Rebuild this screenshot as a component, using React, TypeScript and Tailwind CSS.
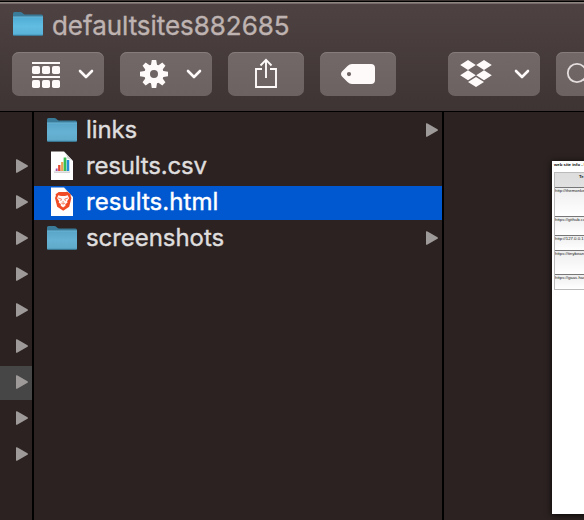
import type { ReactNode } from "react";

function Folder({ header = false }: { header?: boolean }) {
  const id = header ? "folderHeader" : "folderRow";
  return (
    <svg width="32" height="26" viewBox="0 0 32 26" className="shrink-0">
      <defs>
        <linearGradient id={id} x1="0" y1="0" x2="0" y2="1">
          <stop offset="0" stopColor={header ? "#4fabd3" : "#58a5c9"} />
          <stop offset="0.5" stopColor={header ? "#62bde3" : "#66b2d4"} />
          <stop offset="1" stopColor={header ? "#58b0d6" : "#5fa8c8"} />
        </linearGradient>
      </defs>
      <path d="M1 7V2.500q0-1.500 1.500-1.500h6q1 0 1.800.8l1 1q.7.600 1.700.6h16.500q1.500 0 1.500 1.500V8H1z" fill="#397b98" />
      <path d="M1 6h30v17.500q0 1-1 1H2q-1 0-1-1z" fill={`url(#${id})`} />
      <path d="M1 5.900h30" stroke="#75bfdd" strokeWidth=".8" />
      <path d="M1.500 24.300h29" stroke="#387a98" strokeWidth="1" />
    </svg>
  );
}

function Page({ children }: { children: ReactNode }) {
  return (
    <svg width="24" height="30" viewBox="0 0 24 30" className="shrink-0">
      <path d="M1 .5h13L23 10v19H1z" fill="#fefefe" />
      <path d="M14 .5 23 10q-3-2.300-5.500-2.500Q17 4 14 .5z" fill="#cfcfd0" />
      {children}
    </svg>
  );
}

function CsvIcon() {
  return (
    <Page>
      <path d="M5.500 18.500h13l2 2.500H3.500z" fill="#e4e4e6" />
      <path d="M4 21.500h16" stroke="#ccc" strokeWidth=".8" />
      <path d="M6.700 20v-2.500" stroke="#a34ca9" strokeWidth="1.800" />
      <path d="M9.300 20v-6" stroke="#e54831" strokeWidth="2.400" />
      <path d="M12.200 20v-9" stroke="#eda252" strokeWidth="2.200" />
      <path d="M15 20V6.500" stroke="#38bd55" strokeWidth="2.700" />
      <path d="M18 20V9" stroke="#258ed4" strokeWidth="2.500" />
    </Page>
  );
}

function BraveIcon() {
  return (
    <Page>
      <path d="m8.800 5-3.200 2.300.3 1.500-.9 2.300 2.200 8.600 6 4 6-4 2.200-8.600-.9-2.300.3-1.500L17.600 5z" fill="#f04b24" />
      <path d="m8.300 8.200 2.700.7h4l2.700-.7 1.400 3-2 3 .4 1.600-2.100 1.100.1 1.900-2.400 1.600-2.400-1.600.1-1.900-2.100-1.100.4-1.600-2-3z" fill="#fff9f7" />
      <path d="m8.200 11 3.300 1-.8 2M18 11l-3.300 1 .8 2M11.200 16l1.900 1.200 1.900-1.200M13.100 14v3" fill="none" stroke="#f26a49" strokeWidth=".8" />
    </Page>
  );
}

function Chevron() {
  return (
    <svg width="16" height="10" viewBox="0 0 16 10">
      <path d="m2 2 6 6 6-6" fill="none" stroke="#fffafa" strokeWidth="2.600" strokeLinecap="round" strokeLinejoin="round" />
    </svg>
  );
}

function Triangle() {
  return (
    <svg width="12" height="14" viewBox="0 0 12 14" className="shrink-0">
      <path d="M0 .6Q.4-.2 1.500.4l10 5.800q.9.800 0 1.600l-10 5.800Q.4 14.200 0 13.400z" fill="#9f9a9a" />
    </svg>
  );
}

function ToolButton({ width, children }: { width: string; children: ReactNode }) {
  return (
    <div className={`${width} flex h-11 shrink-0 items-center rounded-[7px] bg-linear-to-b from-[#716867] to-[#6b6261] shadow-[inset_0_1px_0_#857c7b]`}>
      {children}
    </div>
  );
}

function GridIcon() {
  return (
    <svg width="28" height="26" viewBox="0 0 28 26" fill="#fffafa" className="mt-0.5">
      <path d="M0 0h28v2H0zM0 14h28v2H0z" />
      {[0, 10, 20].map((x) => (
        <g key={x}>
          <rect x={x} y="4" width="8" height="8" rx="1.800" />
          <rect x={x} y="18" width="8" height="8" rx="1.800" />
        </g>
      ))}
    </svg>
  );
}

function Gear() {
  return (
    <svg width="28" height="28" viewBox="0 0 28 28" fill="#fffafa">
      <path fillRule="evenodd" d="M14 4.200a9.800 9.800 0 1 0 0 19.600 9.800 9.800 0 0 0 0-19.600zm0 5.800a4 4 0 1 1 0 8 4 4 0 0 1 0-8z" />
      {[0, 45, 90, 135, 180, 225, 270, 315].map((a) => (
        <path key={a} d="M11.800 0h4.400l1 6h-6.400z" transform={`rotate(${a} 14 14)`} />
      ))}
    </svg>
  );
}

const files = [
  { name: "links", icon: <Folder />, dir: true, tracking: "tracking-[-0.1px]" },
  { name: "results.csv", icon: <CsvIcon />, dir: false, tracking: "tracking-[-0.18px]" },
  { name: "results.html", icon: <BraveIcon />, dir: false, tracking: "tracking-[0.05px]" },
  { name: "screenshots", icon: <Folder />, dir: true, tracking: "tracking-[-0.06px]" },
];

const sites = [
  ["http://themonkey", "h-[29px]"],
  ["https://github.co", "h-[19px]"],
  ["http://127.0.0.1", "h-[15px]"],
  ["https://tinybeans", "h-[24px]"],
  ["https://gaas.han", "h-[15px]"],
];

export default function App() {
  return (
    <div className="flex h-[520px] w-[584px] flex-col overflow-hidden bg-[#2b2221] font-['Inter',sans-serif]">
      <header className="h-28 shrink-0 border-b border-black bg-linear-to-b from-[#4e4342] to-[#3e3433]">
        <div className="h-px bg-[#393432]" />
        <div className="h-px bg-black" />
        <div className="h-px bg-[#8d8482]" />
        <div className="h-px bg-[#776d6b]" />
        <div className="flex h-12 items-center pl-3">
          <div className="-mt-2"><Folder header /></div>
          <span className="-mt-1 ml-2 text-[26px] leading-8 tracking-[-0.05px] whitespace-nowrap text-[#beb3b1] [-webkit-text-stroke:0.35px_#beb3b1]">defaultsites882685</span>
        </div>
        <div className="flex w-[640px] gap-4 pl-3">
          <ToolButton width="w-[92px]"><div className="ml-5"><GridIcon /></div><div className="ml-[18px]"><Chevron /></div></ToolButton>
          <ToolButton width="w-[92px]"><div className="ml-5"><Gear /></div><div className="ml-[18px]"><Chevron /></div></ToolButton>
          <ToolButton width="w-[76px]">
            <svg width="24" height="32" viewBox="0 0 24 32" className="mb-1 ml-[26px]" fill="none" stroke="#fffafa" strokeWidth="1.900">
              <path d="M8 13H2v18h20V13h-6M12 22V4M6.500 9.500 12 3.800l5.500 5.700" />
            </svg>
          </ToolButton>
          <ToolButton width="w-[76px]">
            <svg width="34" height="20" viewBox="0 0 34 20" className="ml-[21px]">
              <path fillRule="evenodd" d="M11 0h19q4 0 4 4v12q0 4-4 4H11q-2.500 0-4.500-2L1 12.500q-2-2.500 0-5L6.500 2Q8.500 0 11 0zM8 8a2.100 2.100 0 1 0 0 4.200A2.100 2.100 0 0 0 8 8z" fill="#fffafa" />
            </svg>
          </ToolButton>
          <div className="ml-9">
            <ToolButton width="w-[92px]">
              <svg width="32" height="27" viewBox="0 0 32 27" className="mb-px ml-3" fill="#fffafa">
                <path d="m8 0 7.800 5L8 10 .2 5zM24 0l7.800 5-7.800 5-7.800-5zM8 10.200l7.800 5-7.800 5-7.800-5zM24 10.200l7.800 5-7.800 5-7.800-5zM16 17l8 5-8 5-8-5z" />
              </svg>
              <div className="ml-[22px]"><Chevron /></div>
            </ToolButton>
          </div>
          <ToolButton width="w-[60px]">
            <svg width="26" height="26" viewBox="0 0 26 26" className="ml-2.5" fill="none" stroke="#e4dddd" strokeWidth="1.800">
              <circle cx="11" cy="12" r="9.200" /><path d="m17.500 18.500 6 6" />
            </svg>
          </ToolButton>
        </div>
      </header>

      <main className="flex min-h-0 grow">
        <section className="flex w-[34px] shrink-0 flex-col gap-0.5 border-r-2 border-black pt-[38px]">
          {[0, 1, 2, 3, 4, 5, 6, 7, 8].map((i) => (
            <div key={i} className={`flex h-[34px] shrink-0 items-center pb-0.5 pl-4 ${i === 6 ? "bg-[#464646]" : ""}`}>
              <Triangle />
            </div>
          ))}
        </section>
        <section className="flex w-[410px] shrink-0 flex-col gap-0.5 border-r-2 border-black pt-0.5">
          {files.map((f) => (
            <div key={f.name} className={`flex h-[34px] shrink-0 items-center pr-1 ${f.name === "results.html" ? "bg-[#0058d0] text-white" : "text-[#dfdddd]"}`}>
              <div className="flex w-[52px] items-center pl-3">
                <div className={f.dir ? "-mt-0.5" : "-mt-0.5 ml-1"}>{f.icon}</div>
              </div>
              <span className={`-mt-0.5 text-2xl leading-8 [-webkit-text-stroke:0.4px_currentColor] ${f.tracking}`}>{f.name}</span>
              {f.dir && <div className="mb-0.5 ml-auto"><Triangle /></div>}
            </div>
          ))}
        </section>
        <section className="min-w-0 grow overflow-hidden pt-[49px] pl-[108px]">
          <div className="h-[353px] w-[200px] overflow-hidden bg-white pt-px pl-0.5 font-['Liberation_Sans',sans-serif] text-[4.3px] leading-[5px] text-[#222] shadow-[0_1px_6px_#080606]">
            <div className="h-2.5 font-bold whitespace-nowrap text-black">web site info - F</div>
            <div className="border border-[#bbb] bg-linear-to-b from-[#ddd] to-white">
              <div className="h-3.5 pt-px pl-6 font-bold">Te</div>
              {sites.map(([url, h]) => (
                <div key={url} className={`${h} border-t border-[#777] bg-linear-to-b from-[#eee] to-[#fff] whitespace-nowrap`}>{url}</div>
              ))}
            </div>
          </div>
        </section>
      </main>
    </div>
  );
}
